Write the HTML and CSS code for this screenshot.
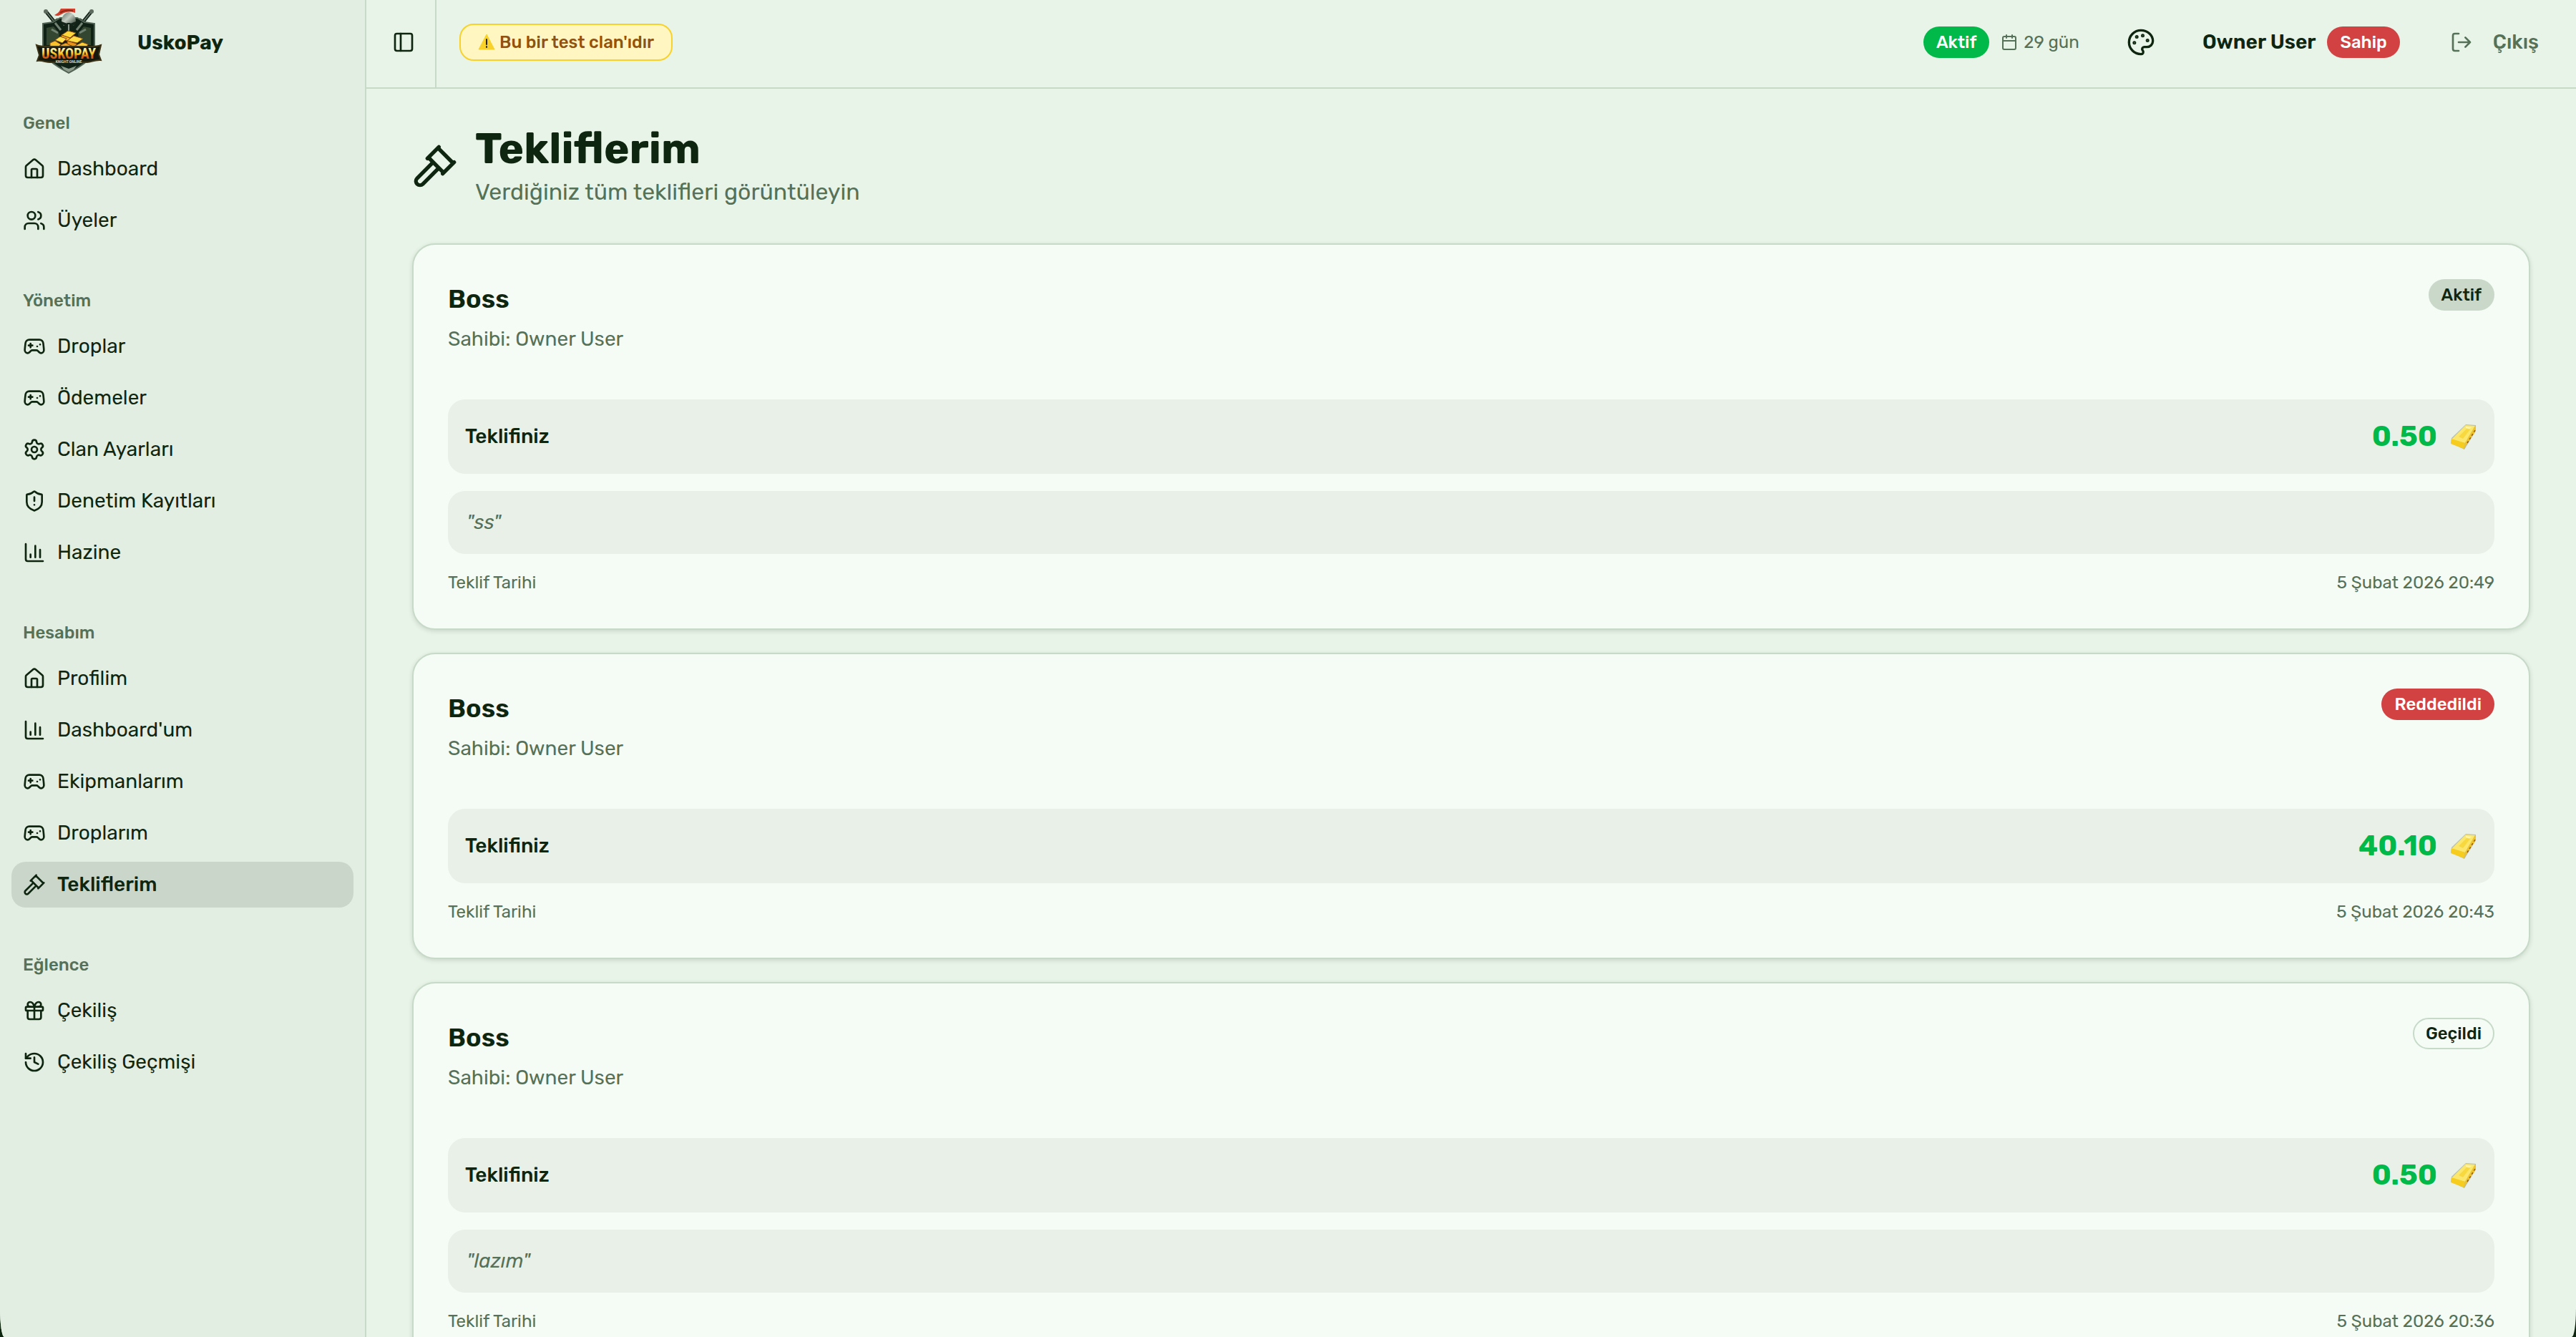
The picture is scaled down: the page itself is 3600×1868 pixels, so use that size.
FILE: index.html
```html
<!DOCTYPE html>
<html lang="tr">
<head>
<meta charset="utf-8">
<meta name="viewport" content="width=device-width, initial-scale=1">
<title>Tekliflerim - UskoPay</title>
<link rel="stylesheet" href="styles.css">
</head>
<body>
<svg class="sprite" aria-hidden="true">
  <symbol id="house" viewBox="0 0 24 24"><path d="M15 21v-8a1 1 0 0 0-1-1h-4a1 1 0 0 0-1 1v8"/><path d="M3 10a2 2 0 0 1 .709-1.528l7-5.999a2 2 0 0 1 2.582 0l7 5.999A2 2 0 0 1 21 10v9a2 2 0 0 1-2 2H5a2 2 0 0 1-2-2z"/></symbol>
  <symbol id="users" viewBox="0 0 24 24"><path d="M16 21v-2a4 4 0 0 0-4-4H6a4 4 0 0 0-4 4v2"/><circle cx="9" cy="7" r="4"/><path d="M22 21v-2a4 4 0 0 0-3-3.87"/><path d="M16 3.128a4 4 0 0 1 0 7.744"/></symbol>
  <symbol id="gamepad" viewBox="0 0 24 24"><path d="M6 11h4M8 9v4M15 12h.01M18 10h.01"/><path d="M17.32 5H6.68a4 4 0 0 0-3.978 3.59c-.006.052-.01.101-.017.152C2.604 9.416 2 14.456 2 16a3 3 0 0 0 3 3c1 0 1.5-.5 2-1l1.414-1.414A2 2 0 0 1 9.828 16h4.344a2 2 0 0 1 1.414.586L17 18c.5.5 1 1 2 1a3 3 0 0 0 3-3c0-1.545-.604-6.584-.685-7.258-.007-.05-.011-.1-.017-.151A4 4 0 0 0 17.32 5z"/></symbol>
  <symbol id="settings" viewBox="0 0 24 24"><path d="M9.671 4.136a2.34 2.34 0 0 1 4.659 0 2.34 2.34 0 0 0 3.319 1.915 2.34 2.34 0 0 1 2.33 4.033 2.34 2.34 0 0 0 0 3.831 2.34 2.34 0 0 1-2.33 4.033 2.34 2.34 0 0 0-3.319 1.915 2.34 2.34 0 0 1-4.659 0 2.34 2.34 0 0 0-3.32-1.915 2.34 2.34 0 0 1-2.33-4.033 2.34 2.34 0 0 0 0-3.831A2.34 2.34 0 0 1 6.35 6.051a2.34 2.34 0 0 0 3.319-1.915"/><circle cx="12" cy="12" r="3"/></symbol>
  <symbol id="shield" viewBox="0 0 24 24"><path d="M20 13c0 5-3.5 7.5-7.66 8.95a1 1 0 0 1-.67-.01C7.5 20.5 4 18 4 13V6a1 1 0 0 1 1-1c2 0 4.5-1.2 6.24-2.72a1.17 1.17 0 0 1 1.52 0C14.51 3.81 17 5 19 5a1 1 0 0 1 1 1z"/><path d="M12 8v4M12 16h.01"/></symbol>
  <symbol id="chart" viewBox="0 0 24 24"><path d="M3 3v16a2 2 0 0 0 2 2h16M18 17V9M13 17V5M8 17v-3"/></symbol>
  <symbol id="gavel" viewBox="0 0 24 24"><path d="m14 13-8.381 8.38a1 1 0 0 1-3.001-3l8.384-8.381M16 16l6-6M21.500 10.500l-8-8M8 8l6-6M8.500 7.500l8 8"/></symbol>
  <symbol id="gift" viewBox="0 0 24 24"><rect x="3" y="8" width="18" height="4" rx="1"/><path d="M12 8v13M19 12v7a2 2 0 0 1-2 2H7a2 2 0 0 1-2-2v-7"/><path d="M7.500 8a2.500 2.500 0 0 1 0-5A4.800 8 0 0 1 12 8a4.800 8 0 0 1 4.500-5 2.500 2.500 0 0 1 0 5"/></symbol>
  <symbol id="history" viewBox="0 0 24 24"><path d="M3 12a9 9 0 1 0 9-9 9.750 9.750 0 0 0-6.740 2.740L3 8"/><path d="M3 3v5h5M12 7v5l4 2"/></symbol>
  <symbol id="panel" viewBox="0 0 24 24"><rect x="3" y="3" width="18" height="18" rx="2"/><path d="M9 3v18"/></symbol>
  <symbol id="calendar" viewBox="0 0 24 24"><path d="M8 2v4M16 2v4M3 10h18"/><rect x="3" y="4" width="18" height="18" rx="2"/></symbol>
  <symbol id="palette" viewBox="0 0 24 24"><path d="M12 22a1 1 0 0 1 0-20 10 9 0 0 1 10 9 5 5 0 0 1-5 5h-2.250a1.750 1.750 0 0 0-1.400 2.800l.3.4a1.750 1.750 0 0 1-1.400 2.800z"/><g fill="currentColor"><circle cx="13.500" cy="6.500" r=".5"/><circle cx="17.500" cy="10.500" r=".5"/><circle cx="6.500" cy="12.500" r=".5"/><circle cx="8.500" cy="7.500" r=".5"/></g></symbol>
  <symbol id="logout" viewBox="0 0 24 24"><path d="m16 17 5-5-5-5M21 12H9M9 21H5a2 2 0 0 1-2-2V5a2 2 0 0 1 2-2h4"/></symbol>
  <symbol id="gold" viewBox="0 0 40 40">
    <path d="M3 29 4 22 24 3 38 4 38 12 22 38z" fill="#b8bfa6"/>
    <path d="M4 24 24 4 37 5 23 29z" fill="#fbe76b"/>
    <path d="M4 23 23 29 21 37 3 30z" fill="#f6cd1f"/>
    <path d="M23 29 37 5 38 12 21 37z" fill="#f0c224"/>
    <path d="M26 29 37 11" stroke="#8f5a12" stroke-width="1.500" stroke-dasharray="3 3"/>
    <path d="M14 20 25 9 30 10 20 23z" fill="#f7d93f"/>
    <path d="M24 6 33 7 29 9 24 8z" fill="#fff6b4"/>
  </symbol>
</svg>

<div class="app">
  <aside class="sidebar">
    <a class="brand" href="#">
      <svg class="logo" viewBox="0 0 96 96" role="img" aria-label="UskoPay Knight Online">
        <defs>
          <linearGradient id="letters" x1="0" y1="0" x2="0" y2="1"><stop offset=".25" stop-color="#fff0a0"/><stop offset=".5" stop-color="#f5c51c"/><stop offset=".65" stop-color="#d9621c"/><stop offset="1" stop-color="#a84c12"/></linearGradient>
          <linearGradient id="steel" x1="0" y1="0" x2="1" y2="1"><stop offset="0" stop-color="#5f6e61"/><stop offset=".45" stop-color="#c4ccc2"/><stop offset="1" stop-color="#26372a"/></linearGradient>
        </defs>
        <g stroke-linecap="round"><path d="M17 5 34 26M79 5 62 26" stroke="#14241a" stroke-width="5"/><path d="M17 5 30 21M79 5 66 21" stroke="#6f7f70" stroke-width="1.500"/><path d="M20 23l12-8M76 23l-12-8" stroke="#2c3c2f" stroke-width="3"/></g>
        <circle cx="16" cy="4" r="3" fill="#5d6c5f"/><circle cx="80" cy="4" r="3" fill="#5d6c5f"/>
        <path d="M12 21 26 19 36 13h24l10 6 14 2v31c0 18-18 28-36 38C30 80 12 70 12 52z" fill="#102216" stroke="#516354" stroke-width="2"/>
        <path d="M17 27l10-2 8 10-3 16H17zM79 27l-10-2-8 10 3 16h15z" fill="#33462f"/>
        <path d="M29 20l8 10M67 20l-8 10M24 29l9 5M72 29l-9 5" stroke="#728272" stroke-width="3"/>
        <path d="M28 9c4-2 6-3 9-9h20v6c-8-3-14-1-19 2-4 2-6 3-10 1z" fill="#d4402f"/><path d="M36 6c5-4 12-4 18-3" stroke="#8e2a18" stroke-width="2" fill="none"/>
        <path d="M38 18c0-7 4-12 10-13 6 1 10 6 10 13l-3 6-5-4h-4l-5 4z" fill="url(#steel)"/>
        <path d="M38 18l8 3h4l8-3v4l-6 2-1 8h-6l-1-8-6-2z" fill="#152419"/><path d="M47 22h2v9h-2z" fill="#8b978a"/>
        <g stroke="#8b4a0d" stroke-width="1"><path d="M38 37l9-6 11 3-8 7z" fill="#ffd83b"/><path d="M38 37l12 4-1 5-12-4z" fill="#f7ae18"/><path d="M29 44l7-5 9 3-6 6z" fill="#ffe04f"/><path d="M46 45l9-7 13 4-8 6z" fill="#ffdc45"/><path d="M46 45l13 4-1 5-12-4z" fill="#e8931a"/><path d="M22 48l7-3 8 5-5 5H22z" fill="#fbc32a"/><path d="M37 51l7-3 7 4-3 4H36z" fill="#f2a91c"/><path d="M55 53l12-6 8 3-3 5-15 3z" fill="#ffce34"/></g>
        <path d="M3 51c8 3 16 2 20 2h50c6 0 12 1 20-2l-3 13 3 8c-9-1-13 3-19 3H22c-6 0-11-3-18-2l3-8z" fill="#14180d" stroke="#3c3216" stroke-width="2"/>
        <text class="logo-name" x="48" y="70" text-anchor="middle" fill="url(#letters)">USKOPAY</text>
        <text class="logo-tag" x="48" y="76" text-anchor="middle" fill="#c9d0c4">KNIGHT ONLINE</text>
        <path d="M37 80l11 4 11-4-4 5-7 4-7-4z" fill="#8d9c8d"/>
      </svg>
      <span>UskoPay</span>
    </a>
    <nav class="nav" aria-label="Ana menü">
      <section class="group"><h2>Genel</h2>
        <a href="#"><svg class="icon"><use href="#house"/></svg>Dashboard</a>
        <a href="#"><svg class="icon"><use href="#users"/></svg>Üyeler</a>
      </section>
      <section class="group"><h2>Yönetim</h2>
        <a href="#"><svg class="icon"><use href="#gamepad"/></svg>Droplar</a>
        <a href="#"><svg class="icon"><use href="#gamepad"/></svg>Ödemeler</a>
        <a href="#"><svg class="icon"><use href="#settings"/></svg>Clan Ayarları</a>
        <a href="#"><svg class="icon"><use href="#shield"/></svg>Denetim Kayıtları</a>
        <a href="#"><svg class="icon"><use href="#chart"/></svg>Hazine</a>
      </section>
      <section class="group"><h2>Hesabım</h2>
        <a href="#"><svg class="icon"><use href="#house"/></svg>Profilim</a>
        <a href="#"><svg class="icon"><use href="#chart"/></svg>Dashboard'um</a>
        <a href="#"><svg class="icon"><use href="#gamepad"/></svg>Ekipmanlarım</a>
        <a href="#"><svg class="icon"><use href="#gamepad"/></svg>Droplarım</a>
        <a href="#" class="active" aria-current="page"><svg class="icon"><use href="#gavel"/></svg>Tekliflerim</a>
      </section>
      <section class="group"><h2>Eğlence</h2>
        <a href="#"><svg class="icon"><use href="#gift"/></svg>Çekiliş</a>
        <a href="#"><svg class="icon"><use href="#history"/></svg>Çekiliş Geçmişi</a>
      </section>
    </nav>
  </aside>

  <div class="page">
    <header class="topbar">
      <div class="toggle-cell"><button class="icon-button" type="button" aria-label="Menüyü aç/kapat"><svg class="icon"><use href="#panel"/></svg></button></div>
      <div class="topbar-body">
        <p class="notice"><svg class="warning" viewBox="0 0 24 24" aria-hidden="true"><path d="M12 1 23 22H1z" fill="#f8d22a" stroke="#f8d22a" stroke-linejoin="round"/><path d="M12 8v7M12 18v1" stroke="#222" stroke-width="2" stroke-linecap="round"/></svg>Bu bir test clan'ıdır</p>
        <div class="status"><span class="badge badge-green">Aktif</span><span class="days"><svg class="icon icon-small"><use href="#calendar"/></svg>29 gün</span></div>
        <button class="icon-button palette" type="button" aria-label="Tema"><svg class="icon icon-medium"><use href="#palette"/></svg></button>
        <div class="user"><strong>Owner User</strong><span class="badge badge-red">Sahip</span></div>
        <button class="logout" type="button"><svg class="icon"><use href="#logout"/></svg>Çıkış</button>
      </div>
    </header>

    <main class="content">
      <div class="heading">
        <svg class="icon icon-large"><use href="#gavel"/></svg>
        <div><h1>Tekliflerim</h1><p>Verdiğiniz tüm teklifleri görüntüleyin</p></div>
      </div>

      <article class="card">
        <div class="card-head"><div><h3>Boss</h3><p>Sahibi: Owner User</p></div><span class="badge badge-soft">Aktif</span></div>
        <div class="card-body">
          <div class="offer"><span>Teklifiniz</span><span class="amount">0.50<svg class="gold"><use href="#gold"/></svg></span></div>
          <p class="note">"ss"</p>
          <div class="date"><span>Teklif Tarihi</span><time datetime="2026-02-05T20:49">5 Şubat 2026 20:49</time></div>
        </div>
      </article>

      <article class="card">
        <div class="card-head"><div><h3>Boss</h3><p>Sahibi: Owner User</p></div><span class="badge badge-red">Reddedildi</span></div>
        <div class="card-body">
          <div class="offer"><span>Teklifiniz</span><span class="amount">40.10<svg class="gold"><use href="#gold"/></svg></span></div>
          <div class="date"><span>Teklif Tarihi</span><time datetime="2026-02-05T20:43">5 Şubat 2026 20:43</time></div>
        </div>
      </article>

      <article class="card">
        <div class="card-head"><div><h3>Boss</h3><p>Sahibi: Owner User</p></div><span class="badge badge-outline">Geçildi</span></div>
        <div class="card-body">
          <div class="offer"><span>Teklifiniz</span><span class="amount">0.50<svg class="gold"><use href="#gold"/></svg></span></div>
          <p class="note">"lazım"</p>
          <div class="date"><span>Teklif Tarihi</span><time datetime="2026-02-05T20:36">5 Şubat 2026 20:36</time></div>
        </div>
      </article>
    </main>
  </div>
</div>
</body>
</html>
```
FILE: styles.css
```css
:root {
  --bg: #e8f4e8;
  --sidebar: #e3eee2;
  --line: #c7dac8;
  --text: #0e260f;
  --muted: #557158;
  --card: #f5fbf5;
  --box: #e9f0e8;
  --green: #00b948;
  --red: #d24242;
}

* { box-sizing: border-box; }
h1, h2, h3, p { margin: 0; }
a { color: inherit; text-decoration: none; }

html { background: #0e260f; }
body {
  margin: 0;
  color: var(--text);
  font-family: Rubik, Inter, sans-serif;
  font-size: 28px;
  line-height: 40px;
}

button {
  padding: 0;
  border: 0;
  background: none;
  color: inherit;
  font: inherit;
  cursor: pointer;
}

.sprite { position: absolute; width: 0; height: 0; }

.icon {
  flex: none;
  display: block;
  width: 32px;
  height: 32px;
  fill: none;
  stroke: currentColor;
  stroke-width: 2;
  stroke-linecap: round;
  stroke-linejoin: round;
}
.icon-small { width: 24px; height: 24px; }
.icon-medium { width: 40px; height: 40px; }
.icon-large { width: 64px; height: 64px; }

.app {
  display: flex;
  height: 100vh;
  overflow: hidden;
  background: var(--bg);
  border-radius: 0 0 6px 6px / 0 0 40px 40px;
}

/* Sidebar */
.sidebar {
  flex: none;
  width: 512px;
  background: var(--sidebar);
  border-right: 2px solid var(--line);
}
.brand {
  display: flex;
  align-items: center;
  gap: 48px;
  height: 124px;
  padding: 0 48px 4px;
  font-weight: 700;
}
.logo { width: 96px; height: 96px; }
.logo-name { font: bold 20px "Liberation Sans Narrow", "Roboto Condensed", Roboto, sans-serif; }
.logo-tag { font: bold 5px Roboto, sans-serif; }

.nav { display: flex; flex-direction: column; gap: 16px; }
.group {
  display: flex;
  flex-direction: column;
  gap: 8px;
  padding: 16px;
}
.group h2 {
  height: 56px;
  padding: 0 16px;
  color: var(--muted);
  font-size: 24px;
  font-weight: 500;
  line-height: 64px;
}
.group a {
  display: flex;
  align-items: center;
  gap: 16px;
  height: 64px;
  padding: 0 16px;
  border-radius: 20px;
}
.group .active { background: #cbd6cb; font-weight: 500; }

/* Page */
.page { flex: 1; min-width: 0; display: flex; flex-direction: column; }
.topbar {
  flex: none;
  display: flex;
  height: 124px;
  border-bottom: 2px solid var(--line);
}
.toggle-cell {
  display: flex;
  align-items: center;
  padding: 0 28px 4px 36px;
  border-right: 2px solid var(--line);
}
.topbar-body {
  flex: 1;
  display: flex;
  align-items: center;
  padding: 0 52px 4px 32px;
}
.notice {
  display: flex;
  align-items: center;
  gap: 6px;
  margin-right: auto;
  padding: 8px 24px;
  border: 2px solid #f8d22a;
  border-radius: 20px;
  background: #fff6c2;
  color: #8f5210;
  font-size: 24px;
  font-weight: 500;
  line-height: 32px;
}
.warning { width: 24px; height: 24px; }
.status { display: flex; align-items: center; gap: 16px; }
.days {
  display: flex;
  align-items: center;
  gap: 8px;
  color: var(--muted);
  font-size: 24px;
}
.palette { margin: 0 66px; }
.user { display: flex; align-items: center; gap: 16px; }
.user strong { font-weight: 600; }
.logout {
  display: flex;
  align-items: center;
  gap: 28px;
  margin-left: 70px;
  color: var(--muted);
  font-weight: 500;
}

.badge {
  flex: none;
  padding: 4px 16px;
  border: 2px solid transparent;
  border-radius: 22px;
  font-size: 24px;
  font-weight: 500;
  line-height: 32px;
}
.badge-green { background: var(--green); color: #fff; }
.badge-red { background: var(--red); color: #fff; }
.badge-soft { background: #c9d8c9; }
.badge-outline { border-color: var(--line); }

.content {
  flex: 1;
  min-height: 0;
  display: flex;
  flex-direction: column;
  gap: 32px;
  padding: 48px 64px;
  overflow-y: auto;
  scrollbar-width: none;
}
.heading {
  display: flex;
  align-items: center;
  gap: 24px;
  margin-bottom: 16px;
}
.heading h1 { font-size: 60px; font-weight: 700; line-height: 72px; }
.heading p { color: var(--muted); font-size: 32px; line-height: 48px; }

/* Offer cards */
.card {
  flex: none;
  padding: 48px;
  border: 2px solid var(--line);
  border-radius: 32px;
  background: var(--card);
  box-shadow: 0 2px 6px rgba(14, 38, 15, 0.14);
}
.card-head {
  display: flex;
  align-items: flex-start;
  justify-content: space-between;
  margin-bottom: 64px;
}
.card-head h3 { font-size: 36px; font-weight: 600; line-height: 56px; }
.card-head p { margin-top: 8px; color: var(--muted); }
.card-body { display: flex; flex-direction: column; gap: 24px; }
.offer {
  display: flex;
  align-items: center;
  justify-content: space-between;
  padding: 24px;
  border-radius: 24px;
  background: var(--box);
  font-weight: 500;
}
.amount {
  display: flex;
  align-items: center;
  gap: 16px;
  color: var(--green);
  font-size: 40px;
  font-weight: 700;
  line-height: 56px;
}
.gold { width: 40px; height: 40px; }
.note {
  padding: 24px 26px;
  border-radius: 24px;
  background: var(--box);
  color: var(--muted);
  font-style: italic;
}
.date {
  display: flex;
  justify-content: space-between;
  color: var(--muted);
  font-size: 24px;
  line-height: 32px;
}
```
